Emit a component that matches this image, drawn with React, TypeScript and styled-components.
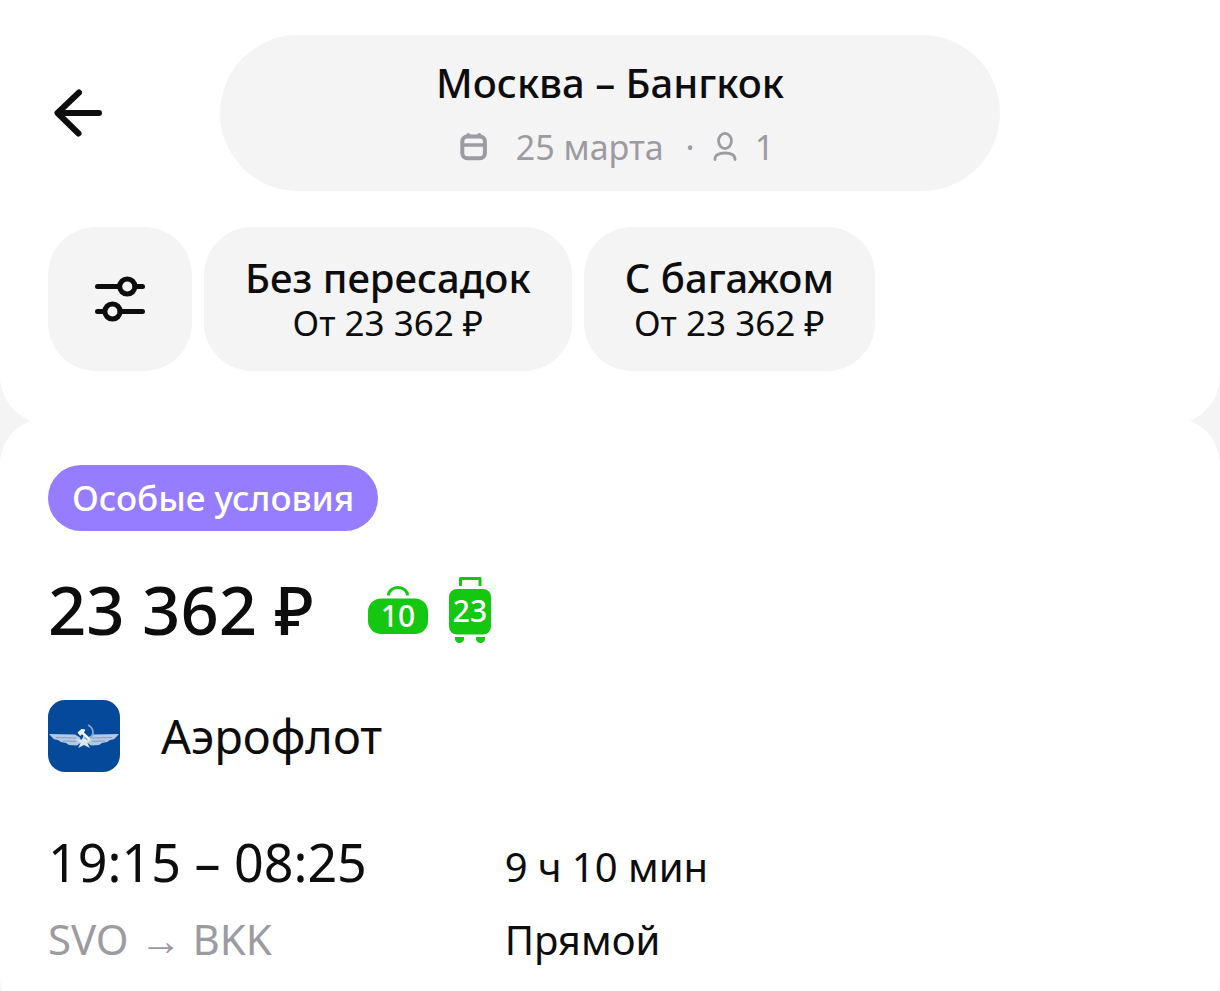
import React from "react";
import styled, { createGlobalStyle } from "styled-components";

const ink = "#0d0d0d";
const muted = "#9c9ba2";
const surface = "#f4f4f4";
const green = "#14c711";

const GlobalStyle = createGlobalStyle`
  * { box-sizing: border-box; }
  body {
    margin: 0;
    background: ${surface};
    color: ${ink};
    font-family: "Noto Sans", "Open Sans", sans-serif;
  }
  button { font: inherit; color: inherit; border: 0; padding: 0; cursor: pointer; }
  svg { display: block; flex: none; }
`;

const Page = styled.main`
  height: 100vh;
  overflow: hidden;
`;

const Header = styled.header`
  background: #fff;
  border-radius: 0 0 48px 48px;
  padding: 35px 48px 53px;
`;

const SearchBar = styled.div`
  display: grid;
  grid-template-columns: 172px 1fr 172px;
  align-items: center;
`;

const BackButton = styled.button`
  justify-self: start;
  background: none;
`;

const SearchPill = styled.button`
  background: ${surface};
  border-radius: 78px;
  height: 156px;
  padding-top: 4px;
  display: flex;
  flex-direction: column;
  align-items: center;
  justify-content: center;
`;

const Route = styled.span`
  font-size: 40px;
  line-height: 64px;
  font-weight: 500;
`;

const Details = styled.span`
  display: flex;
  align-items: center;
  padding-left: 14px;
  font-size: 34px;
  line-height: 64px;
  color: ${muted};
`;

const DateText = styled.span`
  margin: 0 22px 0 28px;
`;

const Passengers = styled.span`
  margin-left: 18px;
`;

const Filters = styled.div`
  display: flex;
  gap: 12px;
  margin-top: 36px;
`;

const Chip = styled.button<{ $square?: boolean }>`
  display: flex;
  flex-direction: column;
  align-items: center;
  justify-content: center;
  height: 144px;
  min-width: 144px;
  padding: ${(p) => (p.$square ? "0" : "0 41px")};
  background: ${surface};
  border-radius: 48px;
  white-space: nowrap;
`;

const ChipTitle = styled.span`
  font-size: 40px;
  line-height: 48px;
  font-weight: 500;
`;

const ChipPrice = styled.span`
  font-size: 35px;
  line-height: 42px;
`;

const Card = styled.article`
  background: #fff;
  border-radius: 48px;
  padding: 48px;
  margin-top: -7px;
`;

const Badge = styled.span`
  display: inline-flex;
  align-items: center;
  height: 66px;
  padding: 0 24px 2px;
  border-radius: 33px;
  background: #967cff;
  color: #fff;
  font-size: 35px;
  font-weight: 500;
`;

const PriceRow = styled.div`
  display: flex;
  align-items: center;
  gap: 54px;
  margin-top: 36px;
`;

const Price = styled.strong`
  font-size: 67px;
  line-height: 84px;
  font-weight: 500;
`;

const Bags = styled.div`
  display: flex;
  align-items: flex-end;
  gap: 20px;
`;

const Airline = styled.div`
  display: flex;
  align-items: center;
  gap: 41px;
  margin-top: 49px;
  font-size: 47px;
  line-height: 72px;
`;

const Flight = styled.div`
  display: grid;
  grid-template-columns: 13fr 19fr;
  align-items: baseline;
  margin-top: 52px;
`;

const Times = styled.span`
  font-size: 52px;
  line-height: 76px;
`;

const Info = styled.span<{ $muted?: boolean }>`
  font-size: ${(p) => (p.$muted ? "42px" : "40px")};
  line-height: 72px;
  color: ${(p) => (p.$muted ? muted : ink)};
`;

const BackIcon = () => (
  <svg width="60" height="60" viewBox="0 0 60 60" fill="none" stroke={ink} strokeWidth="6" strokeLinecap="round" strokeLinejoin="round">
    <path d="M31 9.500 9.500 30l21 20.500M11 30h40" />
  </svg>
);

const CalendarIcon = () => (
  <svg width="28" height="30" viewBox="0 0 28 30" fill="none" stroke={muted} strokeWidth="4" strokeLinecap="round">
    <rect x="2.300" y="4.500" width="22.600" height="21.800" rx="5" />
    <path d="M3 13h21.500" strokeWidth="3.600" />
    <path d="M8.200 3v1M19.300 3v1" />
  </svg>
);

const PersonIcon = () => (
  <svg width="24" height="30" viewBox="0 0 24 30" fill="none" stroke={muted} strokeWidth="2.800" strokeLinecap="round">
    <ellipse cx="12" cy="9" rx="6.400" ry="7.600" />
    <path d="M2 27.500v-.5c0-3.800 4-6 10-6s10 2.200 10 6v.5" />
  </svg>
);

const SlidersIcon = () => (
  <svg width="52" height="50" viewBox="0 0 52 50" fill="none" stroke={ink} strokeWidth="5" strokeLinecap="round">
    <path d="M3.500 12.500h22M41 12.500h7.500M3.500 37.500h6M26 37.500h22.500" />
    <circle cx="33.300" cy="12.500" r="7.600" />
    <circle cx="18.500" cy="37.500" r="7.600" />
  </svg>
);

const bagText = {
  fill: "#fff",
  textAnchor: "middle" as const,
  fontSize: 30,
  fontWeight: 500,
};

const HandBag = ({ weight }: { weight: number }) => (
  <svg width="60" height="68" viewBox="0 0 60 68" role="img" aria-label="Ручная кладь">
    <path d="M20.500 20.500c0-4.500 4-8 9.500-8s9.500 3.500 9.500 8" fill="none" stroke={green} strokeWidth="3" />
    <rect y="23.500" width="60" height="35.500" rx="13" fill={green} />
    <text x="30" y="52" {...bagText}>{weight}</text>
  </svg>
);

const Suitcase = ({ weight }: { weight: number }) => (
  <svg width="44" height="68" viewBox="0 0 44 68" role="img" aria-label="Багаж">
    <path d="M12.500 11V3.500h19.500v7.500" fill="none" stroke={green} strokeWidth="3" strokeLinejoin="round" />
    <rect x="1" y="14" width="42" height="45.500" rx="8" fill={green} />
    <path d="M7 62h9v2a4.500 4 0 0 1-9 0zM28 62h9v2a4.500 4 0 0 1-9 0z" fill={green} />
    <text x="22" y="47" {...bagText}>{weight}</text>
  </svg>
);

const AirlineLogo = () => (
  <svg width="72" height="72" viewBox="0 0 72 72" aria-hidden="true">
    <rect width="72" height="72" rx="17" fill="#04499a" />
    <path d="M1 34 27 34.500l5 3 1 5-4 3-8-.6-3-2-5-.8-3-2-4-.8-2-2z" fill="#b4c8e2" />
    <path d="M71 34 45 34.500l-5 3-1 5 4 3 8-.6 3-2 5-.8 3-2 4-.8 2-2z" fill="#b4c8e2" />
    <path d="M8 37.500 28 38M15 41l13 .4M64 37.500 44 38M57 41l-13 .4" stroke="#7e9fcb" strokeWidth="1" />
    <path d="m36 35 2.200 4.500h5l-3.700 3.500 2.300 5-5.800-3-5.800 3 2.300-5-3.700-3.500h5z" fill="#dce6f2" />
    <path d="M40 25c5.500 2.500 6.500 9 2.500 12.500-2 1.500-4.500 1.300-6.500-.2" fill="none" stroke="#86a8d2" strokeWidth="1.800" />
    <path d="m29.500 32.500 4-3.500 4 .5-1.500 3 6.500 6-1.800 1.800-6.700-6-1.800 1.700z" fill="#f2f6fa" />
  </svg>
);

export default function App() {
  return (
    <>
      <GlobalStyle />
      <Page>
        <Header>
          <SearchBar>
            <BackButton aria-label="Назад"><BackIcon /></BackButton>
            <SearchPill>
              <Route>Москва – Бангкок</Route>
              <Details>
                <CalendarIcon />
                <DateText>25 марта</DateText>
                <span>·</span>
                <Passengers><PersonIcon /></Passengers>
                <Passengers>1</Passengers>
              </Details>
            </SearchPill>
          </SearchBar>
          <Filters>
            <Chip $square aria-label="Фильтры"><SlidersIcon /></Chip>
            <Chip>
              <ChipTitle>Без пересадок</ChipTitle>
              <ChipPrice>От 23 362 ₽</ChipPrice>
            </Chip>
            <Chip>
              <ChipTitle>С багажом</ChipTitle>
              <ChipPrice>От 23 362 ₽</ChipPrice>
            </Chip>
          </Filters>
        </Header>
        <Card>
          <Badge>Особые условия</Badge>
          <PriceRow>
            <Price>23 362 ₽</Price>
            <Bags>
              <HandBag weight={10} />
              <Suitcase weight={23} />
            </Bags>
          </PriceRow>
          <Airline>
            <AirlineLogo />
            <span>Аэрофлот</span>
          </Airline>
          <Flight>
            <Times>19:15 – 08:25</Times>
            <Info>9 ч 10 мин</Info>
            <Info $muted>SVO → BKK</Info>
            <Info>Прямой</Info>
          </Flight>
        </Card>
      </Page>
    </>
  );
}
